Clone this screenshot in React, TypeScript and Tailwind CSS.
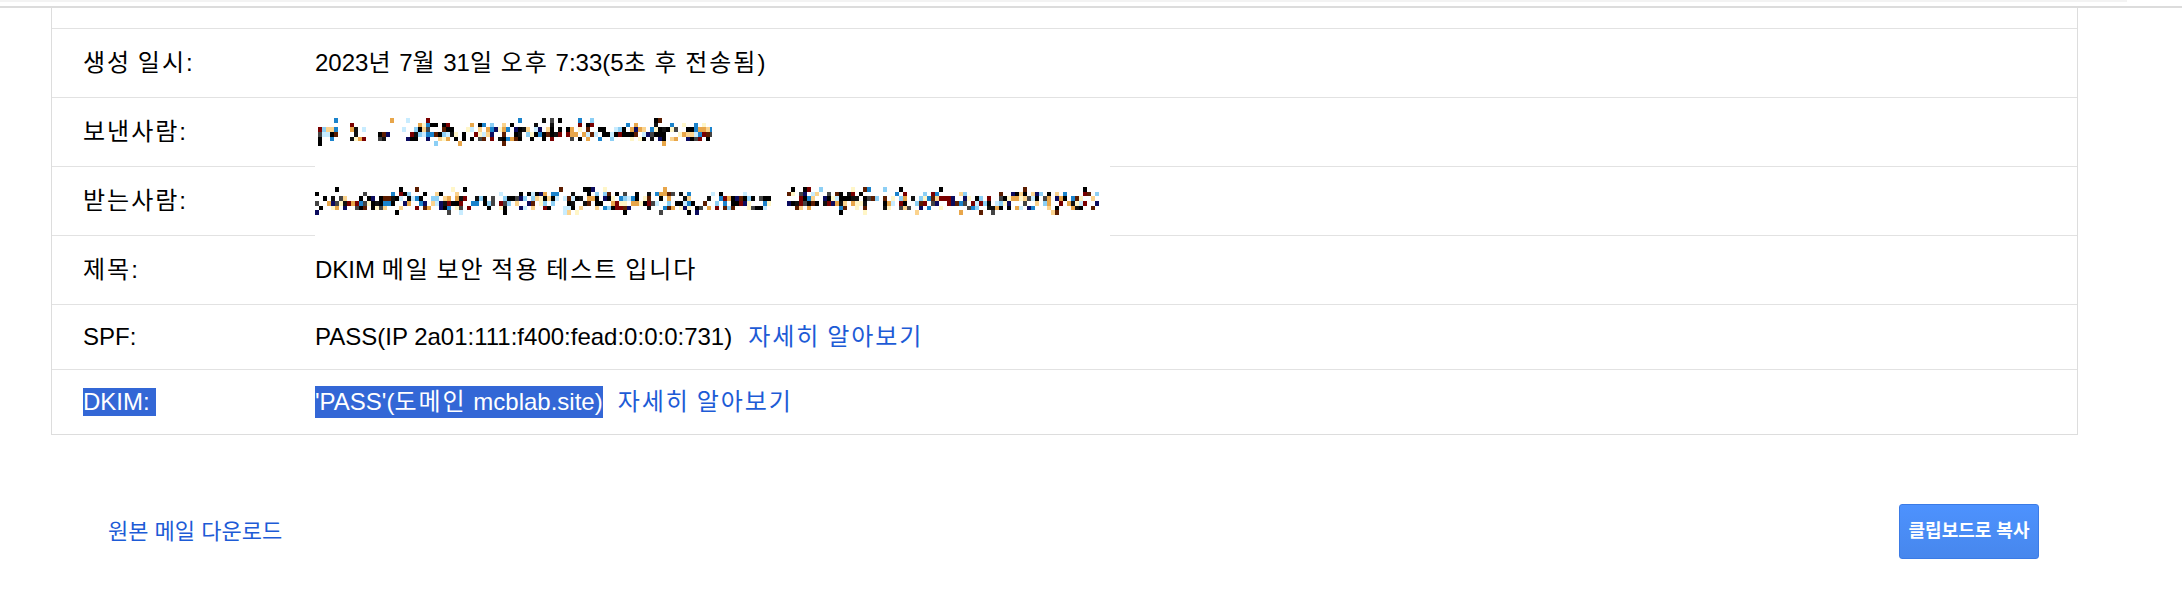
import React from "react";

const palette = [
	"#000000",
	"#000000",
	"#111111",
	"#0b0b5e",
	"#5c1d00",
	"#e8a64a",
	"#fbd38d",
	"#8ccff5",
	"#1b83cc",
	"#fff6c8",
	"#c8ecff",
	"#444444",
	"#7a0000",
	"#000000",
];

function rng(seed: number) {
	let s = seed;
	return () => {
		s = (s * 1664525 + 1013904223) % 4294967296;
		return s / 4294967296;
	};
}

// widen hangul runs so they match the original font's advance
function K({ children }: { children: string }) {
	const parts = children.split(/([\uAC00-\uD7A3]+)/);
	return (
		<>
			{parts.map((p, i) =>
				/[\uAC00-\uD7A3]/.test(p) ? (
					<span key={i} className="tracking-[2px]">
						{p}
					</span>
				) : (
					<React.Fragment key={i}>{p}</React.Fragment>
				)
			)}
		</>
	);
}

type MosaicProps = {
	width: number;
	height: number;
	cell: number;
	segments: [number, number][];
	seed: number;
};

// blurred (pixelated) e-mail addresses
function Mosaic({ width, height, cell, segments, seed }: MosaicProps) {
	const rand = rng(seed);
	const density = [0.14, 0.35, 0.66, 0.66, 0.5, 0.1];
	const rowH = height / density.length;
	const rects: React.ReactNode[] = [];
	for (let x = 0; x < width; x += cell) {
		const inText = segments.some(([a, b]) => x >= a && x < b);
		if (!inText) continue;
		density.forEach((d, r) => {
			if (rand() < d) {
				const c = palette[Math.floor(rand() * palette.length)];
				rects.push(
					<rect key={`${x}-${r}`} x={x} y={r * rowH} width={cell} height={rowH} fill={c} />
				);
			}
		});
	}
	return (
		<svg width={width} height={height} viewBox={`0 0 ${width} ${height}`} shapeRendering="crispEdges">
			{rects}
		</svg>
	);
}

function Row({
	label,
	h,
	children,
	selected,
}: {
	label: string;
	h: string;
	children: React.ReactNode;
	selected?: boolean;
}) {
	return (
		<div className={`flex items-center border-t border-[#e2e2e2] pl-[31px] ${h}`}>
			<div className="w-[232px] shrink-0">
				{selected ? (
					<span className="inline-block bg-[#3367d6] pr-[6px] leading-[28px] text-white">{label}</span>
				) : (
					<K>{label}</K>
				)}
			</div>
			<div className="flex items-center">{children}</div>
		</div>
	);
}

export default function App() {
	return (
		<div className="min-h-[610px] bg-white text-[24px] text-black font-['Liberation_Sans','Noto_Sans_CJK_KR',sans-serif]">
			<div className="h-[2px] w-[2127px] bg-[#f3f3f3]" />
			<div className="mt-[4px] h-[2px] bg-[#dcdcdc]" />
			<div className="ml-[51px] w-[2027px]">
				<div className="border-x border-b border-[#dddddd]">
					<div className="h-[20px]" />
					<Row label="생성 일시:" h="h-[69px]">
						<span>
							<K>2023년 7월 31일 오후 7:33(5초 후 전송됨)</K>
						</span>
					</Row>
					<Row label="보낸사람:" h="h-[69px]">
						<div className="ml-[3px]">
							<Mosaic width={394} height={28} cell={4} seed={7} segments={[[0, 17], [29, 47], [57, 74], [84, 394]]} />
						</div>
					</Row>
					<Row label="받는사람:" h="h-[69px]">
						<div className="relative z-10 flex h-[82px] w-[795px] items-center bg-white">
							<Mosaic width={785} height={28} cell={4} seed={31} segments={[[0, 455], [469, 784]]} />
						</div>
					</Row>
					<Row label="제목:" h="h-[69px]">
						<span>
							<K>DKIM 메일 보안 적용 테스트 입니다</K>
						</span>
					</Row>
					<Row label="SPF:" h="h-[65px]">
						<div className="flex items-center gap-[16px]">
							<span>PASS(IP 2a01:111:f400:fead:0:0:0:731)</span>
							<a className="text-[#1d5bd6]">
								<K>자세히 알아보기</K>
							</a>
						</div>
					</Row>
					<Row label="DKIM:" h="h-[65px]" selected>
						<div className="flex items-center gap-[15px]">
							<span className="bg-[#3367d6] leading-[32px] text-white">
								<K>'PASS'(도메인 mcblab.site)</K>
							</span>
							<a className="text-[#1d5bd6]">
								<K>자세히 알아보기</K>
							</a>
						</div>
					</Row>
				</div>
				<div className="mt-[69px] flex items-center justify-between pl-[57px] pr-[39px]">
					<a className="text-[22px] text-[#1d5bd6]">원본 메일 다운로드</a>
					<button className="h-[55px] w-[140px] rounded-[3px] border border-[#3b7be6] bg-gradient-to-b from-[#4d92fe] to-[#4787ed] text-[18px] font-bold text-white">
						클립보드로 복사
					</button>
				</div>
			</div>
		</div>
	);
}
